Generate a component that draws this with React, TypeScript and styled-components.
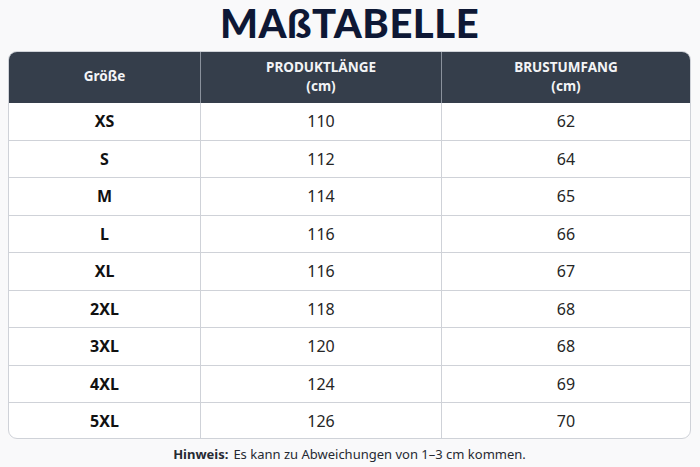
import React from "react";
import styled, { createGlobalStyle } from "styled-components";

const Global = createGlobalStyle`
  html, body { margin: 0; padding: 0; background: #f9f9fa; }
  body { font-family: "Noto Sans", "Open Sans", sans-serif; }
`;

const Page = styled.div`
  width: 700px;
  height: 467px;
  box-sizing: border-box;
  padding: 0 9px 0 8px;
  display: flex;
  flex-direction: column;
  align-items: stretch;
`;

const Title = styled.h1`
  margin: 0;
  height: 51px;
  display: flex;
  align-items: flex-end;
  justify-content: center;
  font-family: Lato, "Noto Sans", sans-serif;
  font-weight: 900;
  font-size: 40px;
  line-height: 40px;
  letter-spacing: 0.5px;
  color: #0e1835;
  padding-bottom: 8px;
  box-sizing: border-box;
`;

const Table = styled.div`
  display: grid;
  grid-template-columns: 192px 241px 1fr;
  border: 1px solid #cfd2d8;
  border-radius: 9px;
  overflow: hidden;
  background: #ffffff;
`;

const HeadCell = styled.div<{ $last?: boolean }>`
  height: 51px;
  background: #353e4b;
  color: #f3f4f6;
  font-weight: 700;
  font-size: 13.5px;
  line-height: 19px;
  display: flex;
  flex-direction: column;
  align-items: center;
  justify-content: center;
  text-align: center;
  border-right: ${(p) => (p.$last ? "none" : "1px solid #8a919c")};
  padding-bottom: 2px;
  box-sizing: border-box;
`;

const Cell = styled.div<{ $last?: boolean; $bottom?: boolean; $bold?: boolean }>`
  height: ${(p) => (p.$bottom ? "35px" : "37.5px")};
  display: flex;
  align-items: center;
  justify-content: center;
  border-right: ${(p) => (p.$last ? "none" : "1px solid #cfd2d8")};
  border-bottom: ${(p) => (p.$bottom ? "none" : "1px solid #cfd2d8")};
  box-sizing: border-box;
  font-size: 16px;
  font-weight: ${(p) => (p.$bold ? 700 : 400)};
  color: ${(p) => (p.$bold ? "#111111" : "#262626")};
`;

const Note = styled.p`
  margin: 0;
  flex: 1;
  display: flex;
  align-items: center;
  justify-content: center;
  font-size: 13px;
  color: #262a33;
  padding-top: 2px;
`;

const NoteLabel = styled.strong`
  font-weight: 700;
  margin-right: 5px;
`;

const rows: [string, string, string][] = [
  ["XS", "110", "62"],
  ["S", "112", "64"],
  ["M", "114", "65"],
  ["L", "116", "66"],
  ["XL", "116", "67"],
  ["2XL", "118", "68"],
  ["3XL", "120", "68"],
  ["4XL", "124", "69"],
  ["5XL", "126", "70"],
];

export default function App() {
  return (
    <>
      <Global />
      <Page>
        <Title>MAßTABELLE</Title>
        <Table>
          <HeadCell>Größe</HeadCell>
          <HeadCell>
            <span>PRODUKTLÄNGE</span>
            <span>(cm)</span>
          </HeadCell>
          <HeadCell $last>
            <span>BRUSTUMFANG</span>
            <span>(cm)</span>
          </HeadCell>
          {rows.map((r, i) => {
            const bottom = i === rows.length - 1;
            return (
              <React.Fragment key={r[0]}>
                <Cell $bold $bottom={bottom}>{r[0]}</Cell>
                <Cell $bottom={bottom}>{r[1]}</Cell>
                <Cell $last $bottom={bottom}>{r[2]}</Cell>
              </React.Fragment>
            );
          })}
        </Table>
        <Note>
          <NoteLabel>Hinweis:</NoteLabel> Es kann zu Abweichungen von 1–3 cm kommen.
        </Note>
      </Page>
    </>
  );
}
